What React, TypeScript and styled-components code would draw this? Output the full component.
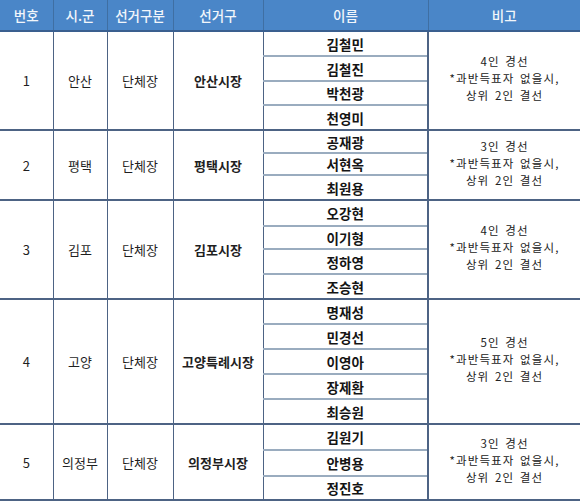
import styled, { createGlobalStyle } from "styled-components";

const GlobalStyle = createGlobalStyle`
  html, body {
    margin: 0;
    padding: 0;
    background: #ffffff;
  }
  body {
    font-family: "Noto Sans CJK KR", "Noto Sans", sans-serif;
  }
`;

const Table = styled.table`
  width: 580px;
  border-collapse: collapse;
  table-layout: fixed;
  font-family: "Noto Sans CJK KR", "Noto Sans", sans-serif;
  font-size: 13px;
  color: #1f1f1f;
`;

const HeadCell = styled.th`
  height: 30px;
  padding: 0;
  background: #4a86c8;
  color: #f2f6fb;
  font-weight: 500;
  font-size: 13.5px;
  text-align: center;
  border-left: 1px solid #3f6fa3;
  border-bottom: 2px solid #3a5f8f;

  &:first-child {
    border-left: none;
  }
`;

const Cell = styled.td<{ $bold?: boolean }>`
  padding: 0;
  text-align: center;
  vertical-align: middle;
  font-weight: ${(p) => (p.$bold ? 700 : 400)};
  border-left: 1px solid #4d6384;
  border-top: 2px solid #4d6384;

  &:first-child {
    border-left: none;
  }
`;

const NameCell = styled.td<{ $first: boolean }>`
  padding: 0;
  text-align: center;
  font-weight: 700;
  font-size: 13.5px;
  color: #141414;
  border-left: 1px solid #4d6384;
  border-top: ${(p) => (p.$first ? "2px solid #4d6384" : "2px solid #9aacbf")};
`;

const NoteCell = styled.td`
  padding: 0 0 4px;
  text-align: center;
  vertical-align: middle;
  font-size: 11.5px;
  color: #222;
  border-left: 2px solid #4d6384;
  border-top: 2px solid #4d6384;
`;

const NoteLine = styled.div`
  line-height: 17px;
  letter-spacing: 1.1px;
  word-spacing: 2px;
  white-space: nowrap;
`;

const Bottom = styled.tr`
  td {
    border-top: 2px solid #4d6384;
    height: 0;
  }
`;

type Group = {
  no: number;
  city: string;
  district: string;
  names: string[];
  heights: number[];
};

const groups: Group[] = [
  { no: 1, city: "안산", district: "안산시장", names: ["김철민", "김철진", "박천광", "천영미"], heights: [25, 25, 24, 25] },
  { no: 2, city: "평택", district: "평택시장", names: ["공재광", "서현옥", "최원용"], heights: [23, 22, 25] },
  { no: 3, city: "김포", district: "김포시장", names: ["오강현", "이기형", "정하영", "조승현"], heights: [26, 23, 25, 25] },
  { no: 4, city: "고양", district: "고양특례시장", names: ["명재성", "민경선", "이영아", "장제환", "최승원"], heights: [25, 25, 25, 25, 25] },
  { no: 5, city: "의정부", district: "의정부시장", names: ["김원기", "안병용", "정진호"], heights: [26, 26, 24] },
];

export default function App() {
  return (
    <>
      <GlobalStyle />
      <Table>
        <colgroup>
          <col style={{ width: 53 }} />
          <col style={{ width: 54 }} />
          <col style={{ width: 66 }} />
          <col style={{ width: 90 }} />
          <col style={{ width: 165 }} />
          <col style={{ width: 152 }} />
        </colgroup>
        <thead>
          <tr>
            <HeadCell>번호</HeadCell>
            <HeadCell>시.군</HeadCell>
            <HeadCell>선거구분</HeadCell>
            <HeadCell>선거구</HeadCell>
            <HeadCell>이름</HeadCell>
            <HeadCell>비고</HeadCell>
          </tr>
        </thead>
        <tbody>
          {groups.map((g) =>
            g.names.map((name, i) => (
              <tr key={g.no + name} style={{ height: g.heights[i] }}>
                {i === 0 && (
                  <>
                    <Cell rowSpan={g.names.length}>{g.no}</Cell>
                    <Cell rowSpan={g.names.length}>{g.city}</Cell>
                    <Cell rowSpan={g.names.length}>단체장</Cell>
                    <Cell rowSpan={g.names.length} $bold>
                      {g.district}
                    </Cell>
                  </>
                )}
                <NameCell $first={i === 0}>{name}</NameCell>
                {i === 0 && (
                  <NoteCell rowSpan={g.names.length}>
                    <NoteLine>{g.names.length}인 경선</NoteLine>
                    <NoteLine>*과반득표자 없을시,</NoteLine>
                    <NoteLine>상위 2인 결선</NoteLine>
                  </NoteCell>
                )}
              </tr>
            ))
          )}
          <Bottom>
            <td colSpan={6} />
          </Bottom>
        </tbody>
      </Table>
    </>
  );
}
